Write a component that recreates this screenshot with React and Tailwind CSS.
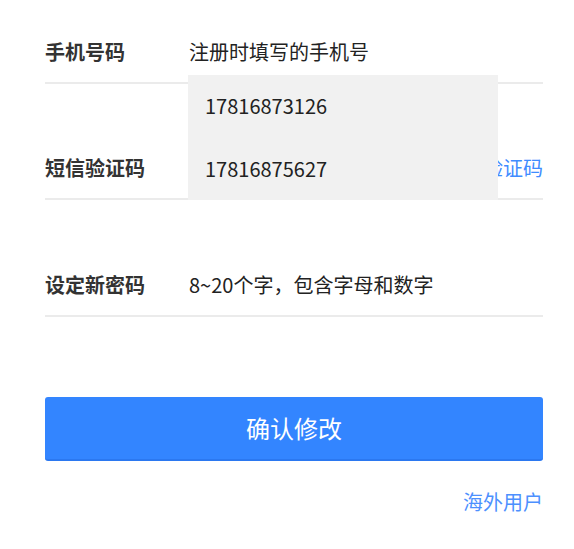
const FONT = {
  fontFamily: '"Noto Sans CJK SC", "Noto Sans", sans-serif',
};

const Row = ({ label, children, className = "" }) => (
  <div className={`flex h-[62px] items-center border-b-2 border-[#ebebeb] ${className}`}>
    <div className="w-[144px] shrink-0 text-[20px] font-bold text-[#333]">{label}</div>
    {children}
  </div>
);

export default function App() {
  const accounts = ["17816873126", "17816875627"];

  return (
    <div className="min-h-[549px] w-[574px] bg-white pl-[45px] pr-[31px] pt-[22px]" style={FONT}>
      <div className="relative">
        <Row label="手机号码">
          <span className="text-[20px] text-[#222]">注册时填写的手机号</span>
        </Row>

        <Row label="短信验证码" className="mt-[54px]">
          <span className="flex-1" />
          <button className="text-[20px] text-[#3f8cff]">获取验证码</button>
        </Row>

        {/* 下拉提示 */}
        <ul className="absolute left-[143px] top-[53px] w-[310px] bg-[#f1f1f1]">
          {accounts.map((num) => (
            <li key={num} className="flex h-[62.5px] items-center pl-[17px] text-[20px] text-[#222]">
              {num}
            </li>
          ))}
        </ul>

        <Row label="设定新密码" className="mt-[55px]">
          <span className="text-[20px] text-[#222]">8~20个字，包含字母和数字</span>
        </Row>
      </div>

      <button className="mt-[80px] h-[64px] w-full rounded-[3px] border-b-2 border-[#2b78f0] bg-[#3385ff] text-[24px] text-white">
        确认修改
      </button>

      <div className="mt-[26px] flex justify-end">
        <a className="text-[20px] text-[#4d90fe]">海外用户</a>
      </div>
    </div>
  );
}
